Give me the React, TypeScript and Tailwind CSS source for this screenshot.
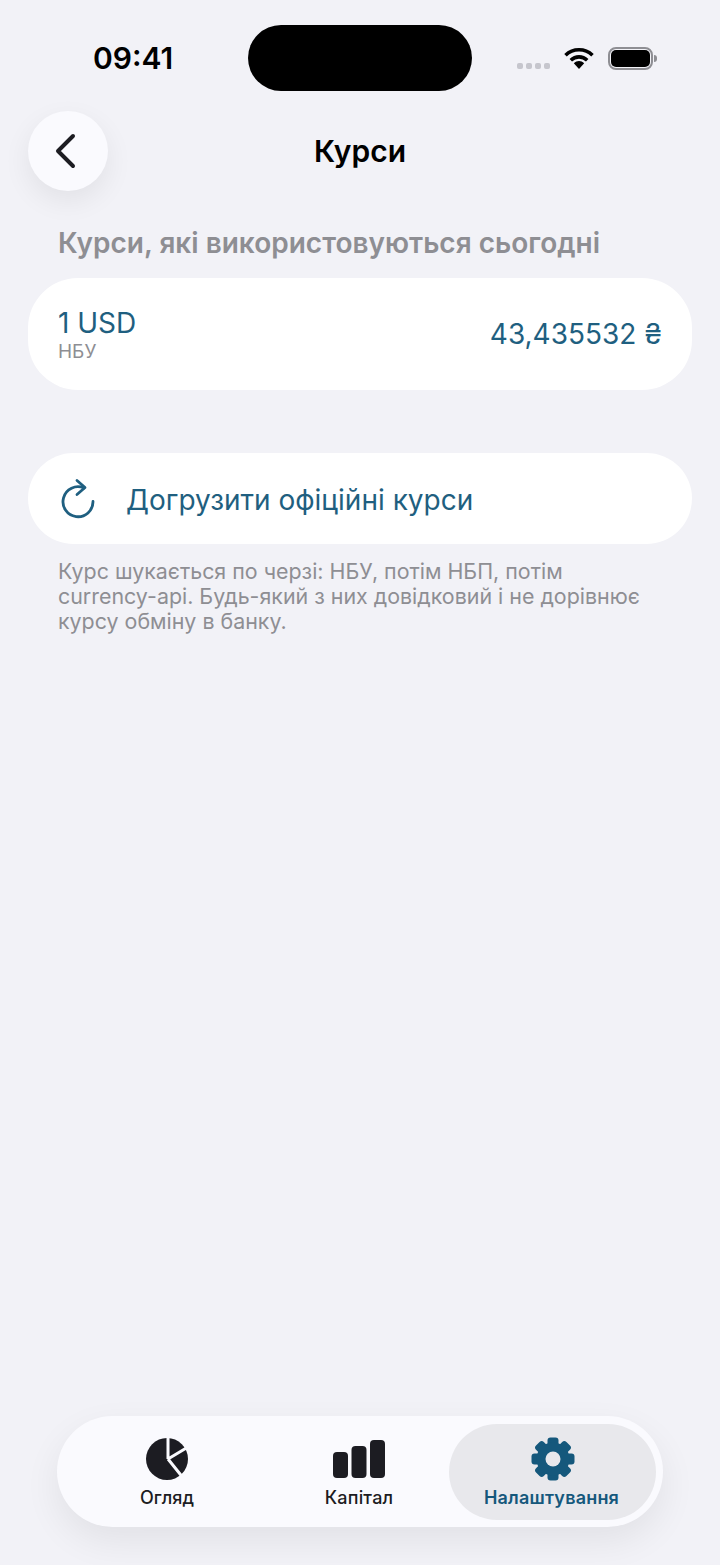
const TEAL = '#1f5f80';

function StatusBar() {
  return (
    <div className="flex items-start h-[111px] pt-[25px]">
      <div className="w-[248px] pl-[93px] pt-[14px] text-[30px] leading-[38px] font-semibold text-black">09:41</div>
      <div className="w-[224px] h-[66px] rounded-[33px] bg-black" />
      <div className="flex items-start pl-[45px] pt-[22px]">
        <div className="flex gap-[3px] pt-[16px]">
          {[0, 1, 2, 3].map(i => (
            <span key={i} className="w-[6px] h-[6px] rounded-[2px] bg-[#c6c6cd]" />
          ))}
        </div>
        <svg className="ml-[14px]" width="30" height="22" viewBox="0 0 30 22">
          <path d="M1.5 8.2C9 1 21 1 28.5 8.2" fill="none" stroke="#000" strokeWidth="3.6" />
          <path d="M6.8 13.2C11.5 8.8 18.5 8.8 23.2 13.2" fill="none" stroke="#000" strokeWidth="3.6" />
          <path d="M9.8 16.2C13 13.4 17 13.4 20.2 16.2L15 22Z" fill="#000" />
        </svg>
        <div className="ml-[14px] w-[45px] h-[23px] rounded-[8px] border-2 border-[#8e8e93] p-[1px]">
          <div className="w-full h-full rounded-[5px] bg-black" />
        </div>
        <span className="ml-[1px] mt-[8px] w-[3px] h-[7px] rounded-r-[3px] bg-[#8e8e93]" />
      </div>
    </div>
  );
}

function Header() {
  return (
    <div className="relative flex items-center justify-center h-[80px] mx-[28px]">
      <button className="absolute left-0 top-0 flex items-center justify-center w-[80px] h-[80px] rounded-full bg-[#fafafe] shadow-[0_10px_28px_rgba(0,0,0,0.07)]">
        <svg className="mr-[6px]" width="24" height="36" viewBox="0 0 24 36">
          <path d="M20 3L5 18l15 15" fill="none" stroke="#1c1c22" strokeWidth="4" strokeLinecap="round" strokeLinejoin="round" />
        </svg>
      </button>
      <h1 className="text-[30px] leading-[40px] font-semibold text-black">Курси</h1>
    </div>
  );
}

function RefreshIcon() {
  return (
    <svg width="40" height="44" viewBox="0 0 40 44" fill="none" stroke={TEAL} strokeWidth="2.8" strokeLinecap="round" strokeLinejoin="round">
      <path d="M35 24.5A15 15 0 1 1 26 11" />
      <path d="M19 3.5l8 7-8 7" />
    </svg>
  );
}

function PieIcon() {
  return (
    <svg width="44" height="44" viewBox="0 0 44 44">
      <circle cx="22" cy="22" r="21" fill="#1c1c22" />
      <path d="M23 0v22M23 22l20-12M23 22l16 20" fill="none" stroke="#fafafe" strokeWidth="3" />
    </svg>
  );
}

function BarsIcon() {
  return (
    <svg width="52" height="40" viewBox="0 0 52 40" fill="#1c1c22">
      <rect x="0" y="13" width="15" height="26" rx="4" />
      <rect x="18.5" y="7" width="15" height="32" rx="4" />
      <rect x="37" y="1" width="15" height="38" rx="4" />
    </svg>
  );
}

function GearIcon() {
  return (
    <svg width="44" height="44" viewBox="-22 -22 44 44" fill="#15587c">
      {[0, 45, 90, 135, 180, 225, 270, 315].map(a => (
        <rect key={a} x="-5.5" y="-21.5" width="11" height="12" rx="3" transform={`rotate(${a})`} />
      ))}
      <circle r="16.5" />
      <circle r="7.5" fill="#e8e8ec" />
    </svg>
  );
}

function TabBar() {
  return (
    <div className="mt-auto mb-[38px] mx-[57px] h-[111px] rounded-[56px] bg-[#fafafe] shadow-[0_14px_36px_rgba(0,0,0,0.07)] flex items-center pr-[7px]">
      <div className="w-[220px] pt-[4px] flex flex-col items-center">
        <PieIcon />
        <span className="mt-[5px] text-[18px] leading-[24px] font-medium text-[#1c1c22]">Огляд</span>
      </div>
      <div className="w-[164px] pt-[4px] flex flex-col items-center">
        <div className="h-[44px] pb-[2px] flex items-end"><BarsIcon /></div>
        <span className="mt-[5px] text-[18px] leading-[24px] tracking-[0.2px] font-medium text-[#1c1c22]">Капітал</span>
      </div>
      <div className="flex-1 ml-[8px] h-[96px] pt-[4px] rounded-[48px] bg-[#e8e8ec] flex flex-col items-center justify-center">
        <GearIcon />
        <span className="mt-[5px] mr-[2px] text-[18px] leading-[24px] tracking-[0.2px] font-semibold text-[#15587c]">Налаштування</span>
      </div>
    </div>
  );
}

export default function App() {
  return (
    <div className="flex flex-col w-[720px] h-[1565px] bg-[#f2f2f7] overflow-hidden font-['Inter',sans-serif]">
      <StatusBar />
      <Header />

      <h2 className="mt-[35px] mx-[58px] text-[28px] leading-[34px] font-semibold text-[#8e8e93] whitespace-nowrap">
        Курси, які використовуються сьогодні
      </h2>

      <div className="mt-[18px] mx-[28px] h-[112px] rounded-[50px] bg-white flex items-center justify-between px-[30px]">
        <div className="mt-[2px] flex flex-col">
          <span className="text-[28px] leading-[34px] text-[#1f5f80]">1 USD</span>
          <span className="text-[19px] leading-[24px] text-[#8e8e93]">НБУ</span>
        </div>
        <span className="text-[28px] leading-[34px] text-[#1f5f80]">43,435532 ₴</span>
      </div>

      <div className="mt-[63px] mx-[28px] h-[91px] rounded-[46px] bg-white flex items-center pl-[30px]">
        <RefreshIcon />
        <span className="ml-[28px] mt-[2px] text-[28px] leading-[34px] text-[#1f5f80]">Догрузити офіційні курси</span>
      </div>

      <p className="mt-[15px] mx-[58px] text-[21.4px] leading-[25px] text-[#8e8e93] whitespace-nowrap">
        Курс шукається по черзі: НБУ, потім НБП, потім
        <br />
        currency-api. Будь-який з них довідковий і не дорівнює
        <br />
        курсу обміну в банку.
      </p>

      <TabBar />
    </div>
  );
}
